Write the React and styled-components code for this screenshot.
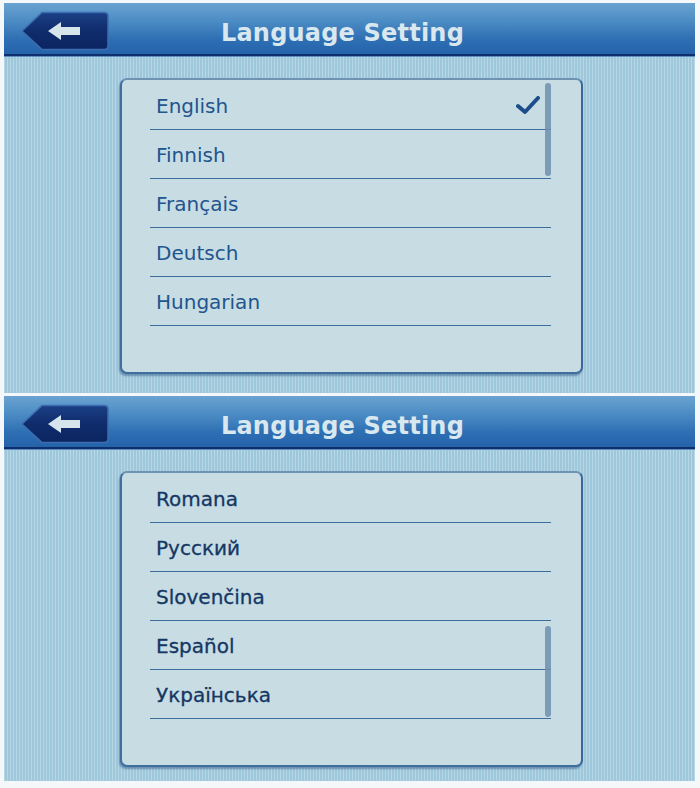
import React from 'react';
import styled, { createGlobalStyle } from 'styled-components';

const GlobalStyle = createGlobalStyle`
  html, body {
    margin: 0;
    padding: 0;
    background: #f4f8fa;
  }
  body {
    font-family: "DejaVu Sans", Verdana, sans-serif;
  }
`;

const Page = styled.div`
  width: 700px;
  height: 788px;
  padding: 3px 5px 0 4px;
  box-sizing: border-box;
  display: flex;
  flex-direction: column;
  gap: 3px;
  overflow: hidden;
`;

const Screen = styled.section`
  height: ${(p) => p.height}px;
  display: flex;
  flex-direction: column;
  background-color: #a9cfe0;
  background-image: repeating-linear-gradient(
    90deg,
    rgba(255, 255, 255, 0.16) 0px,
    rgba(255, 255, 255, 0.16) 1px,
    rgba(70, 130, 170, 0.1) 1px,
    rgba(70, 130, 170, 0.1) 3px
  );
`;

const Header = styled.header`
  height: 51px;
  flex-shrink: 0;
  display: flex;
  align-items: center;
  padding-left: 16px;
  background: linear-gradient(180deg, #6aa3d0 0%, #4c8cc4 35%, #2f70b4 70%, #2462aa 100%);
  border-bottom: 2px solid #0f2f6c;
  box-shadow: 0 1px 0 #5f8fbf;
  position: relative;
`;

const BackButton = styled.button`
  width: 90px;
  height: 40px;
  padding: 0;
  border: none;
  background: none;
  display: flex;
  margin-top: 4px;
  cursor: pointer;
`;

const Title = styled.h1`
  position: absolute;
  left: 0;
  right: 0;
  top: 0;
  bottom: 0;
  margin: 0;
  display: flex;
  align-items: center;
  justify-content: center;
  padding: 8px 14px 0 0;
  font-family: "DejaVu Sans", Verdana, sans-serif;
  font-weight: bold;
  font-size: 24px;
  color: #d9e7ef;
  letter-spacing: 0.2px;
  pointer-events: none;
`;

const Body = styled.div`
  flex: 1;
  padding: 22px 0 0 116px;
`;

const Card = styled.div`
  position: relative;
  width: 459px;
  height: 292px;
  background: #c7dce3;
  border: 2px solid #3f6f9f;
  border-top-color: #6f93b3;
  border-right-color: #3a679a;
  border-radius: 7px;
  box-shadow: -1px 2px 2px rgba(30, 70, 120, 0.45);
`;

const List = styled.ul`
  list-style: none;
  margin: 0;
  padding: 1px 30px 0 28px;
`;

const Row = styled.li`
  height: 49px;
  box-sizing: border-box;
  border-bottom: 1px solid #3d6d9c;
  display: flex;
  align-items: center;
  justify-content: space-between;
  padding: 1px 11px 0 6px;
  font-size: 20px;
  color: ${(p) => (p.dark ? '#143763' : '#22558d')};
  -webkit-text-stroke: ${(p) => (p.dark ? '0.3px #143763' : '0')};
`;

const Scrollbar = styled.div`
  position: absolute;
  right: 30px;
  top: ${(p) => p.top}px;
  width: 6px;
  height: ${(p) => p.length}px;
  border-radius: 3px;
  background: #6f8fae;
  opacity: 0.85;
`;

function BackIcon() {
  return (
    <svg width="90" height="40" viewBox="0 0 90 40">
      <defs>
        <linearGradient id="backFill" x1="0" y1="0" x2="0" y2="1">
          <stop offset="0" stopColor="#1b3f86" />
          <stop offset="0.5" stopColor="#0f2c6c" />
          <stop offset="1" stopColor="#0b2560" />
        </linearGradient>
      </defs>
      <path
        d="M2 20 L22 1.5 H84 Q88 1.5 88 5 V35 Q88 38.5 84 38.5 H22 Z"
        fill="url(#backFill)"
        stroke="#3c6db0"
        strokeWidth="1.5"
      />
      <path d="M28 20 L41 11 V16 H60 V24 H41 V29 Z" fill="#d6e4ec" />
    </svg>
  );
}

function CheckIcon() {
  return (
    <svg width="24" height="20" viewBox="0 0 24 20">
      <path
        d="M2 10 L9 16 L22 2"
        fill="none"
        stroke="#1d4d8a"
        strokeWidth="4"
        strokeLinecap="round"
        strokeLinejoin="round"
      />
    </svg>
  );
}

function LanguageScreen({ items, height, dark, thumb }) {
  return (
    <Screen height={height}>
      <Header>
        <BackButton aria-label="Back">
          <BackIcon />
        </BackButton>
        <Title>Language Setting</Title>
      </Header>
      <Body>
        <Card>
          <List>
            {items.map((item) => (
              <Row key={item.name} dark={dark}>
                <span>{item.name}</span>
                {item.selected && <CheckIcon />}
              </Row>
            ))}
          </List>
          <Scrollbar top={thumb.top} length={thumb.length} />
        </Card>
      </Body>
    </Screen>
  );
}

const firstPage = [
  { name: 'English', selected: true },
  { name: 'Finnish' },
  { name: 'Français' },
  { name: 'Deutsch' },
  { name: 'Hungarian' },
];

const lastPage = [
  { name: 'Romana' },
  { name: 'Русский' },
  { name: 'Slovenčina' },
  { name: 'Español' },
  { name: 'Українська' },
];

export default function App() {
  return (
    <>
      <GlobalStyle />
      <Page>
        <LanguageScreen items={firstPage} height={390} thumb={{ top: 3, length: 93 }} />
        <LanguageScreen items={lastPage} height={385} dark thumb={{ top: 153, length: 91 }} />
      </Page>
    </>
  );
}
